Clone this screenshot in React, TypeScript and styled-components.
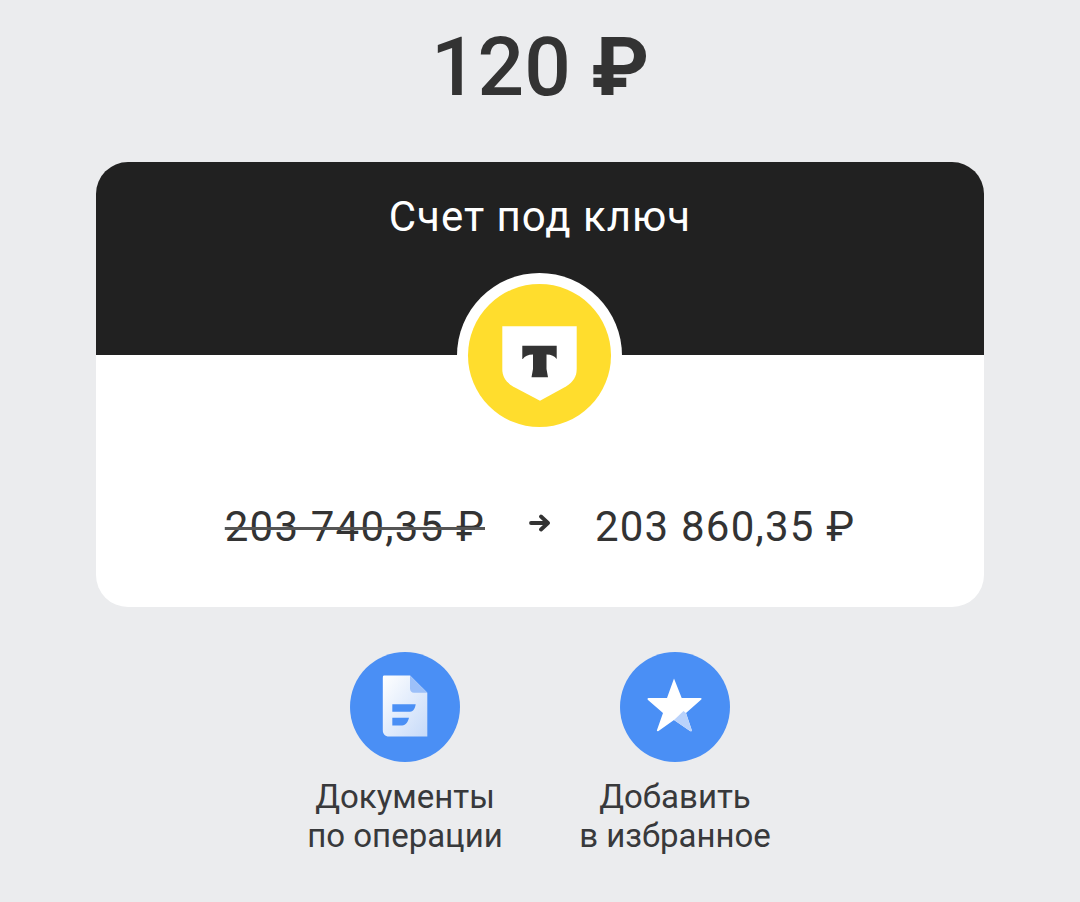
import React from 'react';
import styled, { createGlobalStyle } from 'styled-components';

const GlobalStyle = createGlobalStyle`
  html, body {
    margin: 0;
    padding: 0;
    background: #ebecee;
    font-family: Roboto, 'Liberation Sans', sans-serif;
    color: #333333;
  }
`;

const DocIcon = () => (
  <svg width="60" height="74" viewBox="0 0 60 74">
    <defs>
      <linearGradient id="docFill" x1="0" y1="0" x2="1" y2="1">
        <stop offset="0" stopColor="#ffffff" />
        <stop offset="1" stopColor="#c6daf9" />
      </linearGradient>
    </defs>
    <path
      d="M10 5.500H35L52.300 22.700V66.500H14C10 66.500 7.800 64 7.800 60V8C7.800 6 8 5.500 10 5.500Z"
      fill="url(#docFill)"
    />
    <path d="M35 5.500L52.300 22.700H39C36.500 22.700 35 21 35 18.500Z" fill="#9cc0f9" />
    <path d="M17.300 34.300H40.700C40 38 38.800 41.700 35 41.700H17.300Z" fill="#4a8ff5" />
    <path d="M17.300 47.700H34C33 51.500 31 55.500 27 55.500H17.300Z" fill="#4a8ff5" />
  </svg>
);

const StarIcon = () => (
  <svg width="74" height="74" viewBox="-2 0 74 74">
    <path
      d="M34 8.500L41.700 28H60.500C61.700 28 62 29 61 29.800L46 43L51.700 60C52 61.500 51 61.500 50 61L34 50L18.500 61C17.500 61.500 16.500 61 17 60L23 43L8 30C7 29 7.500 28 8.500 28H27Z"
      fill="#ffffff"
    />
    <path d="M43.500 41L46 43L51.700 60C52 61.500 51 61.500 50 61L34 50Z" fill="#b9d2fb" />
  </svg>
);

const LogoIcon = () => (
  <svg width="90" height="90" viewBox="0 -8 90 90">
    <path
      d="M7.300 7.300H81.700V50C81.700 58 78 63 71 67.500L45 81.700L18 67.500C11 63 7.300 58 7.300 50Z"
      fill="#ffffff"
    />
    <path
      d="M27.300 26.700H61.700V40C59.500 37 56.500 35.500 51.500 35.500V50L53 58.300H36.500L38 50V35.500C33 35.500 30 37 27.800 40H27.300Z"
      fill="#333333"
    />
  </svg>
);

const ArrowIcon = () => (
  <svg width="22" height="18" viewBox="0 0 22 18">
    <path
      d="M2 9H19M12 2.500L19 9L12 15.500"
      fill="none"
      stroke="#333333"
      strokeWidth="3.800"
      strokeLinecap="round"
      strokeLinejoin="round"
    />
  </svg>
);

export default function App() {
  return (
    <>
      <GlobalStyle />
      <Page>
        <Amount>
          120 <Ruble>₽</Ruble>
        </Amount>
        <Card>
          <CardHeader>
            <CardTitle>Счет под ключ</CardTitle>
          </CardHeader>
          <LogoRing>
            <LogoCircle>
              <LogoIcon />
            </LogoCircle>
          </LogoRing>
          <CardBody>
            <OldBalance>203 740,35 ₽</OldBalance>
            <ArrowBox>
              <ArrowIcon />
            </ArrowBox>
            <NewBalance>203 860,35 ₽</NewBalance>
          </CardBody>
        </Card>
        <Actions>
          <Action>
            <ActionCircle>
              <DocIcon />
            </ActionCircle>
            <ActionLabel>
              Документы
              <br />
              по операции
            </ActionLabel>
          </Action>
          <Action>
            <ActionCircle>
              <StarIcon />
            </ActionCircle>
            <ActionLabel>
              Добавить
              <br />в избранное
            </ActionLabel>
          </Action>
        </Actions>
      </Page>
    </>
  );
}

const Page = styled.div`
  width: 1080px;
  height: 902px;
  overflow: hidden;
  display: flex;
  flex-direction: column;
  align-items: center;
  padding-top: 19px;
  box-sizing: border-box;
`;

const Amount = styled.div`
  font-size: 82px;
  font-weight: 500;
  line-height: 96px;
  color: #333333;
`;

const Ruble = styled.span`
  font-weight: 700;
`;

const Card = styled.div`
  position: relative;
  width: 888px;
  height: 445px;
  margin-top: 47px;
  border-radius: 32px;
  background: #ffffff;
  overflow: hidden;
  display: flex;
  flex-direction: column;
`;

const CardHeader = styled.div`
  height: 193px;
  background: #212121;
  display: flex;
  justify-content: center;
  padding-top: 30px;
  box-sizing: border-box;
`;

const CardTitle = styled.div`
  font-size: 42px;
  line-height: 50px;
  letter-spacing: 1px;
  color: #ffffff;
`;

const LogoRing = styled.div`
  position: absolute;
  left: 361px;
  top: 111px;
  width: 165px;
  height: 165px;
  border-radius: 50%;
  background: #ffffff;
  display: flex;
  align-items: center;
  justify-content: center;
`;

const LogoCircle = styled.div`
  width: 143px;
  height: 143px;
  border-radius: 50%;
  background: #ffdd2d;
  display: flex;
  align-items: center;
  justify-content: center;
`;

const CardBody = styled.div`
  flex: 1;
  display: flex;
  align-items: center;
  justify-content: center;
  gap: 44px;
  padding-top: 92px;
  box-sizing: border-box;
`;

const OldBalance = styled.span`
  font-size: 42px;
  line-height: 50px;
  letter-spacing: 1.2px;
  color: #333333;
  text-decoration: line-through;
  text-decoration-thickness: 3px;
  text-decoration-color: #555555;
`;

const NewBalance = styled.span`
  font-size: 42px;
  line-height: 50px;
  letter-spacing: 1.2px;
  color: #333333;
`;

const ArrowBox = styled.span`
  display: flex;
  margin-bottom: 8px;
`;

const Actions = styled.div`
  display: flex;
  justify-content: center;
  margin-top: 45px;
  gap: 75px;
`;

const Action = styled.div`
  width: 195px;
  display: flex;
  flex-direction: column;
  align-items: center;
`;

const ActionCircle = styled.div`
  width: 110px;
  height: 110px;
  border-radius: 50%;
  background: #4a8ff5;
  display: flex;
  align-items: center;
  justify-content: center;
`;

const ActionLabel = styled.div`
  margin-top: 15px;
  font-size: 33px;
  line-height: 39px;
  text-align: center;
  white-space: nowrap;
  color: #38393b;
`;
